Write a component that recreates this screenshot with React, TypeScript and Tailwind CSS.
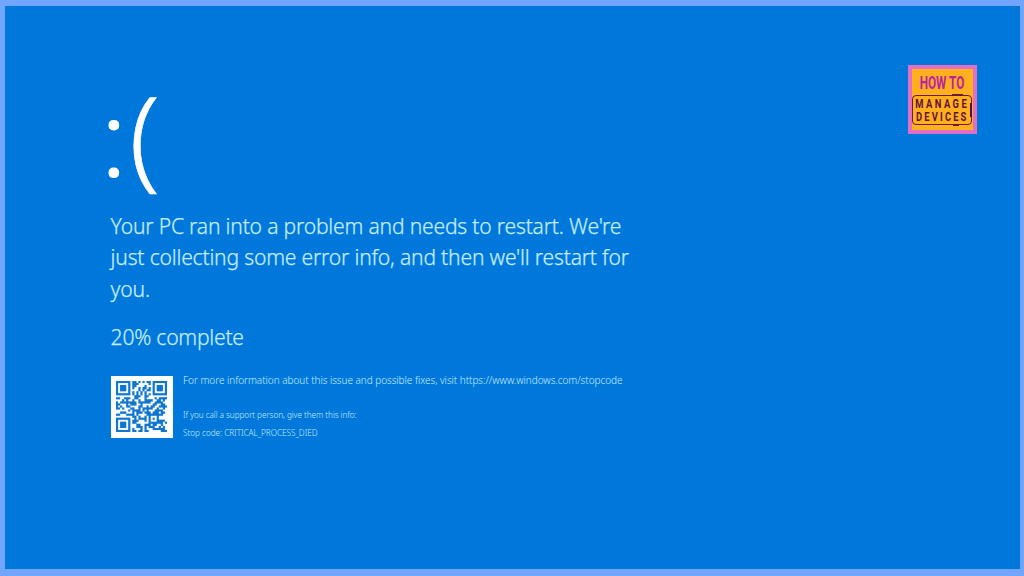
const SIZE = 25;

function gfMul(a: number, b: number): number {
  let r = 0;
  for (let i = 7; i >= 0; i--) {
    r = (r << 1) ^ ((r >>> 7) * 0x11d);
    r ^= ((b >>> i) & 1) * a;
  }
  return r;
}

// Error correction codewords for a single block.
function remainder(data: number[], degree: number): number[] {
  const gen: number[] = Array(degree).fill(0);
  gen[degree - 1] = 1;
  let root = 1;
  for (let i = 0; i < degree; i++) {
    for (let j = 0; j < degree; j++) {
      gen[j] = gfMul(gen[j], root);
      if (j + 1 < degree) gen[j] ^= gen[j + 1];
    }
    root = gfMul(root, 2);
  }
  const res: number[] = Array(degree).fill(0);
  for (const b of data) {
    const f = b ^ (res.shift() as number);
    res.push(0);
    gen.forEach((c, i) => (res[i] ^= gfMul(c, f)));
  }
  return res;
}

// Version 2, level L, byte mode, mask pattern 4.
function encode(text: string): boolean[][] {
  const bits: number[] = [];
  const put = (v: number, n: number) => {
    for (let i = n - 1; i >= 0; i--) bits.push((v >>> i) & 1);
  };
  put(4, 4);
  put(text.length, 8);
  for (const ch of text) put(ch.charCodeAt(0), 8);
  put(0, Math.min(4, 272 - bits.length));
  while (bits.length % 8) bits.push(0);
  for (let p = 0xec; bits.length < 272; p ^= 0xec ^ 0x11) put(p, 8);
  const data: number[] = [];
  for (let i = 0; i < 272; i += 8) data.push(parseInt(bits.slice(i, i + 8).join(""), 2));
  const all = data.concat(remainder(data, 10));

  const m: boolean[][] = Array.from({ length: SIZE }, () => Array(SIZE).fill(false));
  const fn: boolean[][] = Array.from({ length: SIZE }, () => Array(SIZE).fill(false));
  const set = (x: number, y: number, v: boolean) => {
    if (x < 0 || y < 0 || x >= SIZE || y >= SIZE) return;
    m[y][x] = v;
    fn[y][x] = true;
  };
  for (let i = 0; i < SIZE; i++) {
    set(6, i, i % 2 === 0);
    set(i, 6, i % 2 === 0);
  }
  for (const [cx, cy] of [[3, 3], [SIZE - 4, 3], [3, SIZE - 4]]) {
    for (let dy = -4; dy <= 4; dy++)
      for (let dx = -4; dx <= 4; dx++) {
        const d = Math.max(Math.abs(dx), Math.abs(dy));
        set(cx + dx, cy + dy, d !== 2 && d !== 4);
      }
  }
  for (let dy = -2; dy <= 2; dy++)
    for (let dx = -2; dx <= 2; dx++) set(18 + dx, 18 + dy, Math.max(Math.abs(dx), Math.abs(dy)) !== 1);

  const fmt = (1 << 3) | 4;
  let rem = fmt;
  for (let i = 0; i < 10; i++) rem = (rem << 1) ^ ((rem >>> 9) * 0x537);
  const f = ((fmt << 10) | rem) ^ 0x5412;
  const bit = (i: number) => ((f >>> i) & 1) === 1;
  for (let i = 0; i <= 5; i++) set(8, i, bit(i));
  set(8, 7, bit(6));
  set(8, 8, bit(7));
  set(7, 8, bit(8));
  for (let i = 9; i < 15; i++) set(14 - i, 8, bit(i));
  for (let i = 0; i < 8; i++) set(SIZE - 1 - i, 8, bit(i));
  for (let i = 8; i < 15; i++) set(8, SIZE - 15 + i, bit(i));
  set(8, SIZE - 8, true);

  let i = 0;
  for (let right = SIZE - 1; right >= 1; right -= 2) {
    if (right === 6) right = 5;
    for (let v = 0; v < SIZE; v++)
      for (let j = 0; j < 2; j++) {
        const x = right - j;
        const y = ((right + 1) & 2) === 0 ? SIZE - 1 - v : v;
        if (fn[y][x]) continue;
        const b = i < all.length * 8 && ((all[i >>> 3] >>> (7 - (i & 7))) & 1) === 1;
        m[y][x] = b !== ((Math.floor(x / 3) + Math.floor(y / 2)) % 2 === 0);
        i++;
      }
  }
  return m;
}

function QrCode({ text }: { text: string }) {
  const d = encode(text)
    .map((row, y) => row.map((on, x) => (on ? `M${x} ${y}h1v1h-1z` : "")).join(""))
    .join("");
  return (
    <div className="flex h-[62px] w-[62px] shrink-0 items-center justify-center bg-[#fafeff]">
      <svg viewBox="0 0 25 25" className="h-[51px] w-[51px]">
        <path d={d} fill="#1577d0" stroke="#1577d0" strokeWidth="0.08" />
      </svg>
    </div>
  );
}

function Logo() {
  return (
    <aside className="mt-[59px] flex h-[69px] w-[69px] flex-col items-center border-4 border-[#df70c5] bg-[#ffb01c] font-['Roboto',sans-serif] font-bold whitespace-nowrap">
      <div className="mt-[4px] h-[19px] scale-x-[0.62] text-[19px] leading-[19px] text-[#bc1fa4]">HOW TO</div>
      <div className="relative mt-[3px] flex h-[30px] w-[60px] flex-col items-center rounded-[4px] border border-[#6a1a3c] text-[#64113a]">
        <div className="mt-px h-[13px] scale-x-[0.72] pl-[1px] text-[13px] leading-[14px] tracking-[3.4px]">MANAGE</div>
        <div className="h-[13px] scale-x-[0.72] pl-[1px] text-[13px] leading-[13px] tracking-[3px]">DEVICES</div>
        <div className="absolute top-[7px] -right-[1px] h-[14px] w-[2px] bg-[#4a0f55]" />
        <div className="absolute -top-[2px] right-[8px] h-[1px] w-[11px] bg-[#6a1a3c]" />
        <div className="absolute right-[12px] -bottom-[2px] h-[1px] w-[6px] bg-[#6a1a3c]" />
      </div>
    </aside>
  );
}

export default function App() {
  return (
    <main className="flex h-[576px] w-[1024px] items-start justify-between border-t-[6px] border-r-[4px] border-b-[7px] border-l-[5px] border-[#72a5ff] bg-[#0078db] pr-[43.5px] pl-[105.6px] font-['Noto_Sans','Open_Sans',sans-serif] font-light text-[#c4edff]">
      <section className="pt-[60px]">
        <h1 className="h-[143.5px] leading-[136px] whitespace-nowrap text-white">
          <span className="-ml-[9.5px] inline-block scale-x-[1.15] text-[105px] leading-[136px]">:</span>
          <span className="ml-[2.5px] text-[111px] [-webkit-text-stroke:0.6px_white]">(</span>
        </h1>
        <p className="text-[21.1px] leading-[31.8px] tracking-[-0.2px] [-webkit-text-stroke:0.25px_#c4edff]">
          Your PC ran into a problem and needs to restart. We're
          <br />
          just collecting some error info, and then we'll restart for
          <br />
          you.
        </p>
        <p className="mt-[16.4px] text-[21.1px] leading-[32px] tracking-[-0.24px] [-webkit-text-stroke:0.25px_#c4edff]">
          20% complete
        </p>
        <div className="mt-[22.3px] flex gap-[10.5px]">
          <QrCode text="https://www.windows.com/stopcode" />
          <div className="whitespace-nowrap">
            <p className="text-[10px] leading-[9px] tracking-[-0.04px]">
              For more information about this issue and possible fixes, visit https://www.windows.com/stopcode
            </p>
            <p className="mt-[25.5px] text-[8.2px] leading-[10px] tracking-[-0.05px]">
              If you call a support person, give them this info:
            </p>
            <p className="mt-2 text-[8.2px] leading-[10px] tracking-[-0.03px]">Stop code: CRITICAL_PROCESS_DIED</p>
          </div>
        </div>
      </section>
      <Logo />
    </main>
  );
}
